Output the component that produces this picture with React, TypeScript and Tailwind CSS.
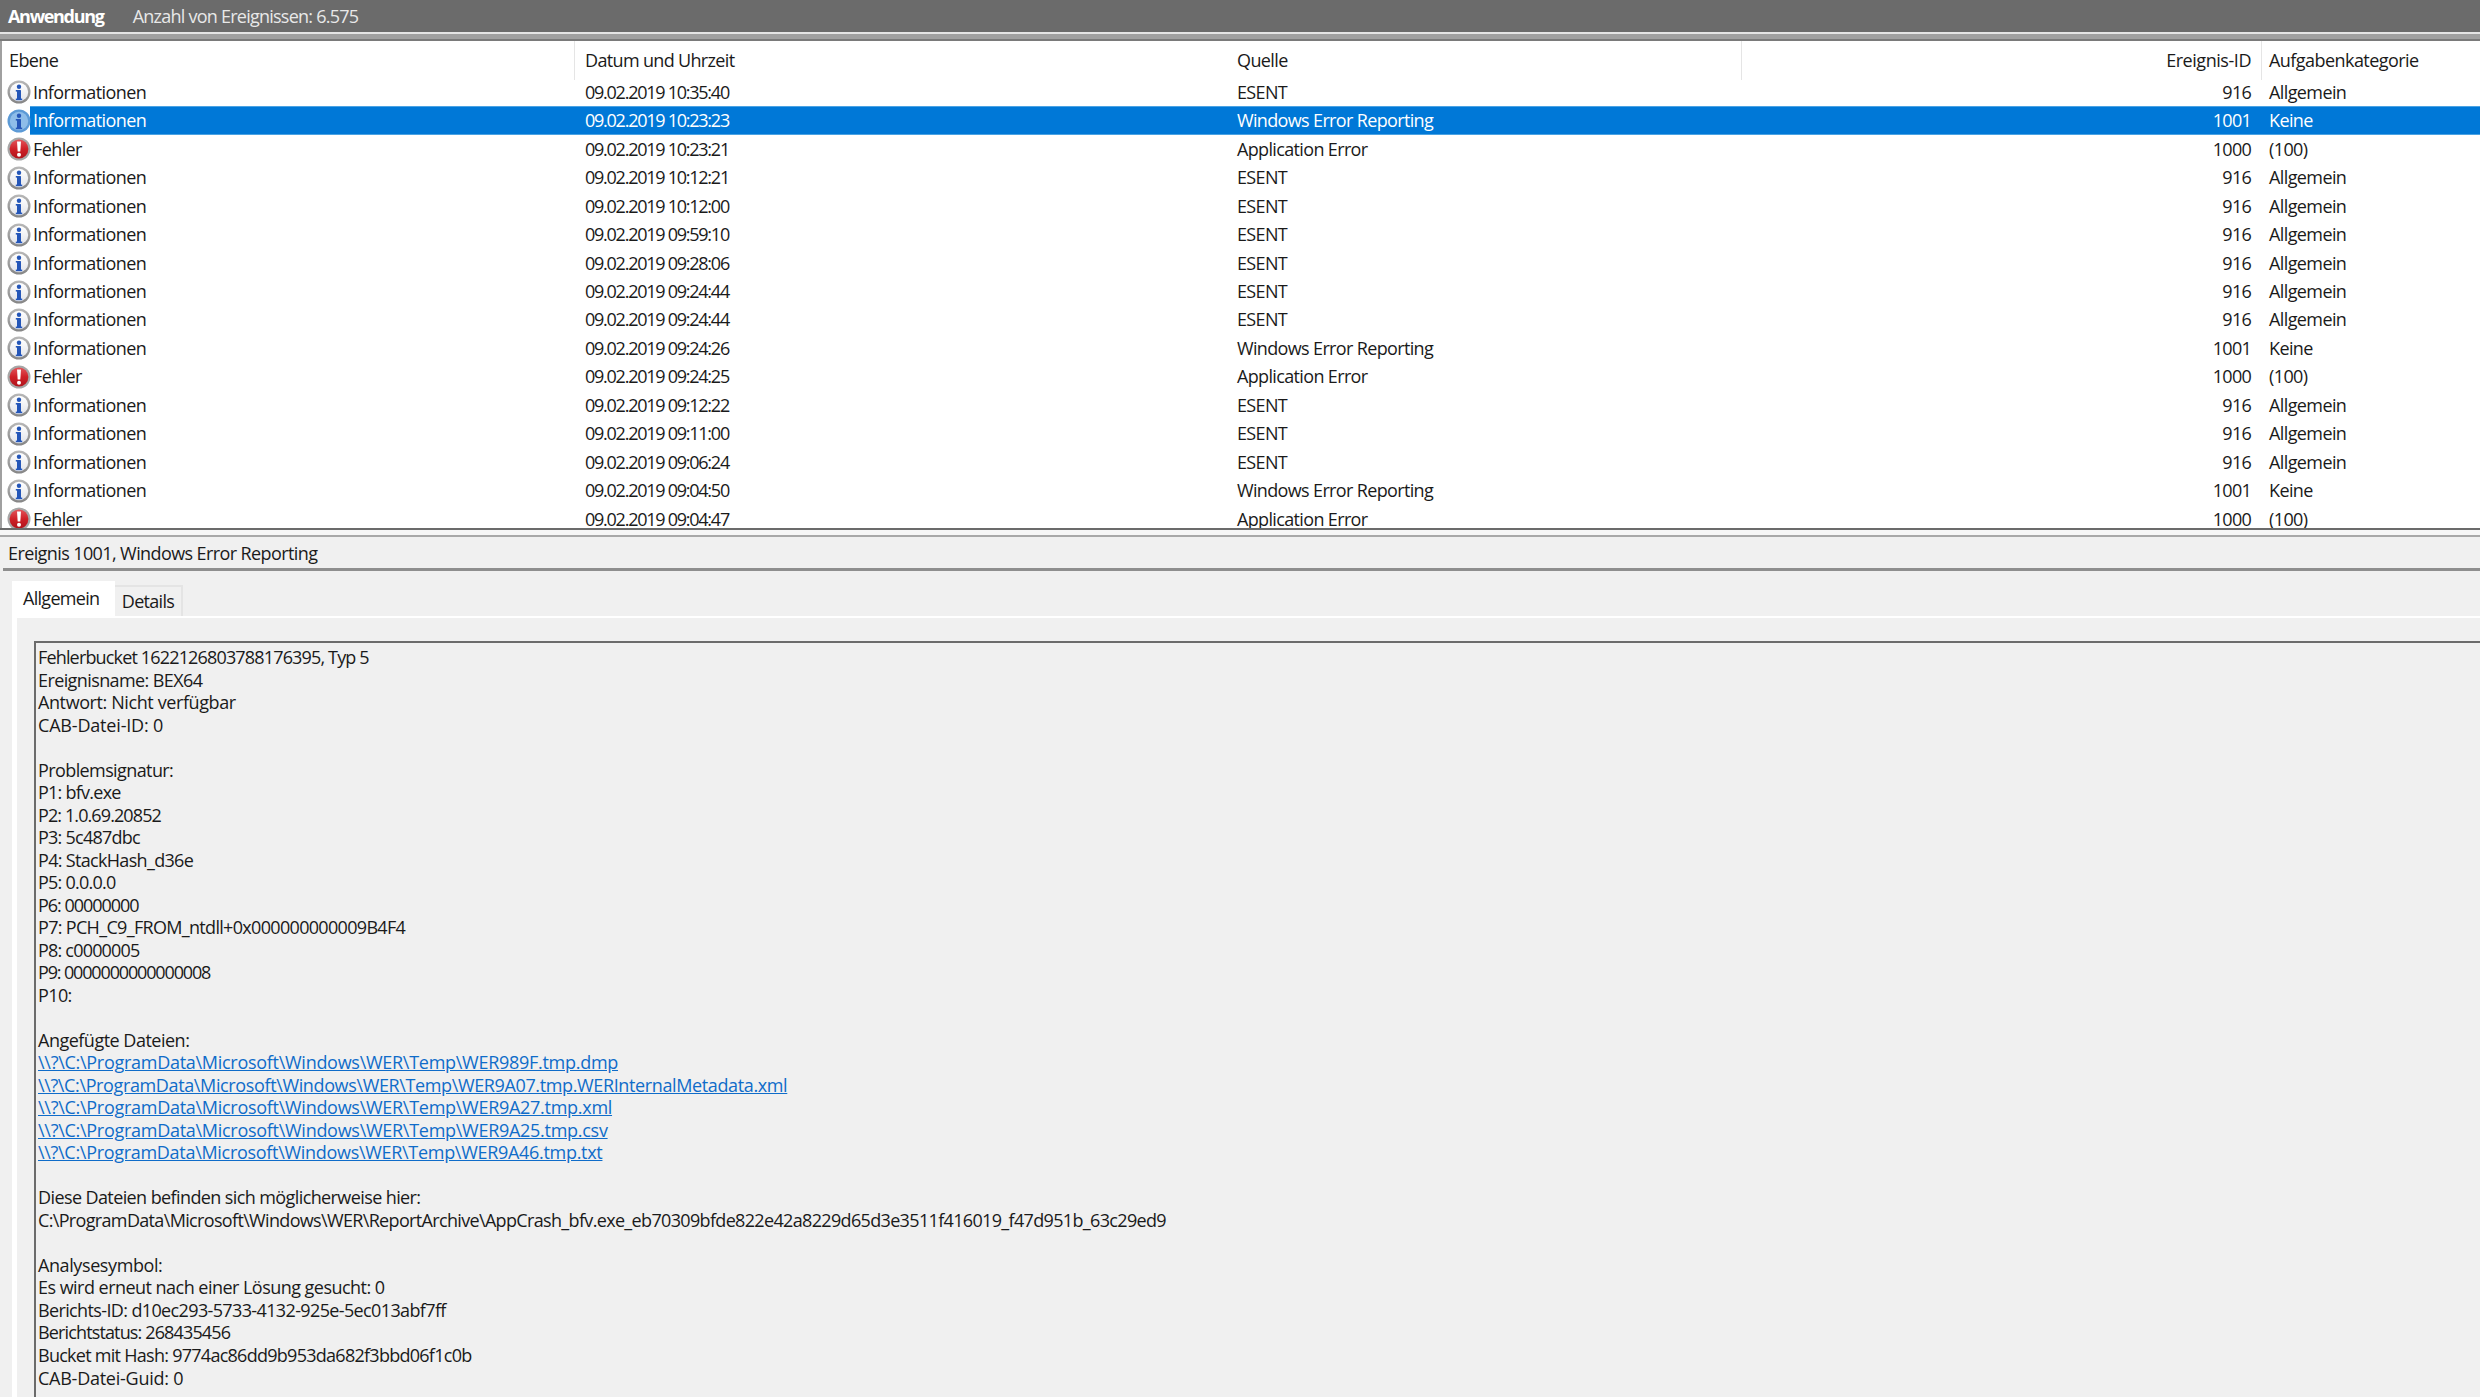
const events = [
  ["info", "09.02.2019 10:35:40", "ESENT", "916", "Allgemein"],
  ["info", "09.02.2019 10:23:23", "Windows Error Reporting", "1001", "Keine"],
  ["error", "09.02.2019 10:23:21", "Application Error", "1000", "(100)"],
  ["info", "09.02.2019 10:12:21", "ESENT", "916", "Allgemein"],
  ["info", "09.02.2019 10:12:00", "ESENT", "916", "Allgemein"],
  ["info", "09.02.2019 09:59:10", "ESENT", "916", "Allgemein"],
  ["info", "09.02.2019 09:28:06", "ESENT", "916", "Allgemein"],
  ["info", "09.02.2019 09:24:44", "ESENT", "916", "Allgemein"],
  ["info", "09.02.2019 09:24:44", "ESENT", "916", "Allgemein"],
  ["info", "09.02.2019 09:24:26", "Windows Error Reporting", "1001", "Keine"],
  ["error", "09.02.2019 09:24:25", "Application Error", "1000", "(100)"],
  ["info", "09.02.2019 09:12:22", "ESENT", "916", "Allgemein"],
  ["info", "09.02.2019 09:11:00", "ESENT", "916", "Allgemein"],
  ["info", "09.02.2019 09:06:24", "ESENT", "916", "Allgemein"],
  ["info", "09.02.2019 09:04:50", "Windows Error Reporting", "1001", "Keine"],
  ["error", "09.02.2019 09:04:47", "Application Error", "1000", "(100)"],
];

// digits and backslashes run narrower / wider than in the original font, so lines get their own tracking
const details: { text: string; cls?: string }[] = [
  { text: "Fehlerbucket 1622126803788176395, Typ 5", cls: "tracking-[-0.84px]" },
  { text: "Ereignisname: BEX64", cls: "tracking-[-0.6px]" },
  { text: "Antwort: Nicht verfügbar", cls: "tracking-[-0.4px]" },
  { text: "CAB-Datei-ID: 0", cls: "tracking-[-0.18px]" },
  { text: "" },
  { text: "Problemsignatur:" },
  { text: "P1: bfv.exe", cls: "tracking-[-0.75px]" },
  { text: "P2: 1.0.69.20852", cls: "tracking-[-0.9px]" },
  { text: "P3: 5c487dbc", cls: "tracking-[-0.75px]" },
  { text: "P4: StackHash_d36e", cls: "tracking-[-0.68px]" },
  { text: "P5: 0.0.0.0", cls: "tracking-[-0.75px]" },
  { text: "P6: 00000000", cls: "tracking-[-1.03px]" },
  { text: "P7: PCH_C9_FROM_ntdll+0x000000000009B4F4", cls: "tracking-[-0.68px]" },
  { text: "P8: c0000005", cls: "tracking-[-0.8px]" },
  { text: "P9: 0000000000000008", cls: "tracking-[-1.15px]" },
  { text: "P10:" },
  { text: "" },
  { text: "Angefügte Dateien:", cls: "tracking-[-0.5px]" },
  { text: "\\\\?\\C:\\ProgramData\\Microsoft\\Windows\\WER\\Temp\\WER989F.tmp.dmp", cls: "tracking-[-0.28px] text-[#0f6cc9] underline" },
  { text: "\\\\?\\C:\\ProgramData\\Microsoft\\Windows\\WER\\Temp\\WER9A07.tmp.WERInternalMetadata.xml", cls: "tracking-[-0.37px] text-[#0f6cc9] underline" },
  { text: "\\\\?\\C:\\ProgramData\\Microsoft\\Windows\\WER\\Temp\\WER9A27.tmp.xml", cls: "tracking-[-0.28px] text-[#0f6cc9] underline" },
  { text: "\\\\?\\C:\\ProgramData\\Microsoft\\Windows\\WER\\Temp\\WER9A25.tmp.csv", cls: "tracking-[-0.28px] text-[#0f6cc9] underline" },
  { text: "\\\\?\\C:\\ProgramData\\Microsoft\\Windows\\WER\\Temp\\WER9A46.tmp.txt", cls: "tracking-[-0.3px] text-[#0f6cc9] underline" },
  { text: "" },
  { text: "Diese Dateien befinden sich möglicherweise hier:" },
  { text: "C:\\ProgramData\\Microsoft\\Windows\\WER\\ReportArchive\\AppCrash_bfv.exe_eb70309bfde822e42a8229d65d3e3511f416019_f47d951b_63c29ed9", cls: "tracking-[-0.66px]" },
  { text: "" },
  { text: "Analysesymbol:", cls: "tracking-[-0.4px]" },
  { text: "Es wird erneut nach einer Lösung gesucht: 0", cls: "tracking-[-0.53px]" },
  { text: "Berichts-ID: d10ec293-5733-4132-925e-5ec013abf7ff", cls: "tracking-[-0.63px]" },
  { text: "Berichtstatus: 268435456", cls: "tracking-[-0.86px]" },
  { text: "Bucket mit Hash: 9774ac86dd9b953da682f3bbd06f1c0b", cls: "tracking-[-0.73px]" },
  { text: "CAB-Datei-Guid: 0", cls: "tracking-[-0.25px]" },
];

function InfoIcon({ selected }: { selected?: boolean }) {
  const blue = "#2456b8";
  return (
    <svg width="24" height="24" viewBox="0 0 24 24" className="shrink-0">
      <defs>
        <linearGradient id="ring" x1="0" y1="0" x2="0" y2="1">
          <stop offset="0" stopColor="#b8b8b8" />
          <stop offset="1" stopColor="#858585" />
        </linearGradient>
        <linearGradient id="face" x1="0" y1="0" x2="0" y2="1">
          <stop offset="0" stopColor="#ffffff" />
          <stop offset="1" stopColor="#e2e4ea" />
        </linearGradient>
      </defs>
      {selected ? (
        <>
          <circle cx="12" cy="12" r="11.5" fill="#5c9ad6" />
          <circle cx="12" cy="12" r="9.2" fill="#8ebde9" />
        </>
      ) : (
        <>
          <circle cx="12" cy="12" r="11.5" fill="url(#ring)" />
          <circle cx="12" cy="12" r="9.2" fill="url(#face)" />
        </>
      )}
      <circle cx="12" cy="6.8" r="2.2" fill={blue} />
      <rect x="10" y="10" width="4" height="10" rx="0.5" fill={blue} />
      <rect x="8.8" y="10" width="2" height="1.6" fill={blue} />
      <rect x="8.8" y="18.6" width="6.4" height="1.6" fill={blue} />
    </svg>
  );
}

function ErrorIcon() {
  return (
    <svg width="24" height="24" viewBox="0 0 24 24" className="shrink-0">
      <defs>
        <linearGradient id="red" x1="0" y1="0" x2="0" y2="1">
          <stop offset="0" stopColor="#e2545a" />
          <stop offset="0.5" stopColor="#cf2027" />
          <stop offset="1" stopColor="#b0141c" />
        </linearGradient>
      </defs>
      <circle cx="12" cy="12" r="11.5" fill="#a6a6a6" />
      <circle cx="12" cy="12" r="9.4" fill="url(#red)" />
      <path d="M10 4.5h4l-.7 10h-2.6z" fill="#fff" />
      <circle cx="12" cy="17.8" r="2" fill="#fff" />
    </svg>
  );
}

export default function App() {
  return (
    <div className="h-[1397px] w-[2480px] overflow-hidden bg-[#f0f0f0] font-['Open_Sans',sans-serif] text-[18px] tracking-[-0.6px] text-[#1a1a1a]">
      <div className="flex h-[32px] items-center gap-[29px] bg-[#6b6b6b] pl-[8px] text-white">
        <span className="font-bold tracking-[-1.3px]">Anwendung</span>
        <span className="tracking-[-0.76px] text-[#e8e8e8]">Anzahl von Ereignissen: 6.575</span>
      </div>
      <div className="h-[9px] border-t-2 border-b-2 border-t-[#e4e4e4] border-b-[#7a7a7a] bg-[#a0a0a0]"></div>

      <div className="h-[487px] overflow-hidden border-l-2 border-[#a0a0a0] bg-white">
        <div className="grid h-[37px] grid-cols-[573px_651px_516px_1fr_218px] items-center leading-[39px]">
          <span className="h-full border-r border-[#e5e5e5] pl-[7px]">Ebene</span>
          <span className="pl-[10px] tracking-[-0.66px]">Datum und Uhrzeit</span>
          <span className="h-full border-r border-[#e5e5e5] pl-[11px]">Quelle</span>
          <span className="h-full border-r border-[#e5e5e5] pr-[10px] text-right tracking-[-0.45px]">Ereignis-ID</span>
          <span className="pl-[7px] tracking-[-0.55px]">Aufgabenkategorie</span>
        </div>
        {events.map((e, i) => {
          const selected = i === 1;
          return (
            <div
              key={i}
              className={
                selected
                  ? "relative grid h-[28.47px] grid-cols-[573px_651px_516px_1fr_218px] items-center text-white"
                  : "grid h-[28.47px] grid-cols-[573px_651px_516px_1fr_218px] items-center"
              }
            >
              {selected && (
                <div className="absolute inset-y-0 right-0 left-[28px] border-y border-[#4ba3e3] bg-[#0078d7]"></div>
              )}
              <span className="relative flex items-center gap-[2px] pl-[5px]">
                {e[0] === "info" ? <InfoIcon selected={selected} /> : <ErrorIcon />}
                {e[0] === "info" ? "Informationen" : "Fehler"}
              </span>
              <span className="relative pl-[10px] tracking-[-1.25px]">{e[1]}</span>
              <span className="relative pl-[11px] tracking-[-0.65px]">{e[2]}</span>
              <span className="relative pr-[11px] text-right tracking-[-0.75px]">{e[3]}</span>
              <span className="relative pl-[7px]">{e[4]}</span>
            </div>
          );
        })}
      </div>

      <div className="h-[9px] border-t-2 border-b-2 border-t-[#6b6b6b] border-b-[#a8a8a8] bg-[#f6f6f6]"></div>

      <div className="ml-[3px] flex h-[34px] items-center border-b-[3px] border-[#8e8e8e] pl-[5px] pt-[2px]">
        Ereignis 1001, Windows Error Reporting
      </div>

      <div className="flex h-[45px] items-end pl-[12px]">
        <div className="flex h-[35px] w-[103px] items-center bg-white pl-[11px] tracking-[-0.7px]">Allgemein</div>
        <div className="flex h-[31px] w-[68px] items-center justify-center border-t-2 border-r-2 border-[#e4e4e4] bg-[#f0f0f0] tracking-[-0.7px]">Details</div>
      </div>

      <div className="ml-[12px] h-[800px] border-t-2 border-l-[5px] border-white pl-[17px] pt-[23px]">
        <div className="h-full border-t-2 border-l-2 border-[#6b6b6b] pl-[2px] pt-[3px] leading-[22.53px]">
          {details.map((d, i) => (
            <div key={i} className={d.cls ? "h-[22.53px] " + d.cls : "h-[22.53px]"}>
              {d.text}
            </div>
          ))}
        </div>
      </div>
    </div>
  );
}
